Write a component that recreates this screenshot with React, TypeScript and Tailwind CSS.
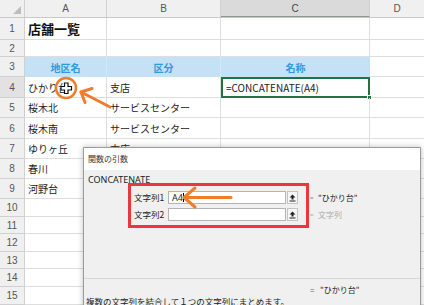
import React from "react";

const jp = "font-['Noto_Sans_CJK_JP','Noto_Sans',sans-serif]";

const rowHeights = [22, 17, 20, 21, 20, 21, 20, 20, 20, 18, 17, 18, 17, 18, 18];

const cells: Record<number, [string, string, string]> = {
  1: ["店舗一覧", "", ""],
  4: ["ひかり台", "支店", "=CONCATENATE(A4)"],
  5: ["桜木北", "サービスセンター", ""],
  6: ["桜木南", "サービスセンター", ""],
  7: ["ゆりヶ丘", "本店", ""],
  8: ["春川", "", ""],
  9: ["河野台", "", ""],
};

const cols = "grid grid-cols-[25px_82px_114px_149px_1fr]";

const RefIcon = () => (
  <svg width="7" height="8" viewBox="0 0 7 8">
    <path d="M3.5 0.5 L6.5 3.5 L4.5 3.5 L4.5 5.5 L2.5 5.5 L2.5 3.5 L0.5 3.5 Z" fill="#222" />
    <rect x="0.5" y="6.5" width="6" height="1" fill="#222" />
  </svg>
);

const App = () => {
  return (
    <div className={`relative w-[424px] h-[305px] overflow-hidden bg-white ${jp}`}>
      {/* --- column headers --- */}
      <div className={`${cols} h-[18px] bg-[#f0f0f0] border-b border-[#c8c8c8] text-[10px] text-[#555] font-['Liberation_Sans',sans-serif]`}>
        <div className="relative border-r border-[#d0d0d0]">
          <div className="absolute right-[3px] bottom-[3px] w-0 h-0 border-l-[8px] border-l-transparent border-b-[8px] border-b-[#bdbdbd]" />
        </div>
        <div className="flex items-center justify-center border-r border-[#d0d0d0]">A</div>
        <div className="flex items-center justify-center border-r border-[#d0d0d0]">B</div>
        <div className="flex items-center justify-center border-r border-[#d0d0d0] bg-[#dadada] border-b border-b-[#8a9a8f] text-[#444]">C</div>
        <div className="flex items-center justify-center">D</div>
      </div>

      {/* --- rows --- */}
      {rowHeights.map((h, i) => {
        const r = i + 1;
        const data = cells[r] ?? ["", "", ""];
        const isHead = r === 3;
        const teal = r >= 4 && r <= 9;
        const line = teal ? "border-b border-[#7fd3dd]" : "border-b border-[#dedede]";
        return (
          <div key={r} className={cols} style={{ height: h }}>
            <div
              className={`flex items-center justify-center text-[10px] border-r border-b border-[#d0d0d0] font-['Liberation_Sans',sans-serif] text-[#555] ${
                r === 4 ? "bg-[#e2e2e2]" : "bg-[#f0f0f0]"
              }`}
            >
              {r}
            </div>
            {isHead ? (
              <>
                <div className="flex items-center justify-center bg-[#c5e1f6] text-[#2f9ade] text-[10px] font-bold border-r border-[#d5e7f4]">地区名</div>
                <div className="flex items-center justify-center bg-[#c5e1f6] text-[#2f9ade] text-[10px] font-bold border-r border-[#d5e7f4]">区分</div>
                <div className="flex items-center justify-center bg-[#c5e1f6] text-[#2f9ade] text-[10px] font-bold">名称</div>
                <div className="border-b border-[#dedede]" />
              </>
            ) : (
              <>
                <div
                  className={`flex items-center pl-[3px] border-r border-[#dedede] ${line} ${
                    r === 1 ? "text-[13px] font-bold text-[#111]" : "text-[10px] text-[#222]"
                  }`}
                >
                  {data[0]}
                </div>
                <div className={`flex items-center pl-[3px] text-[10px] text-[#222] border-r border-[#dedede] ${line}`}>{data[1]}</div>
                <div
                  className={`relative flex items-center pl-[3px] text-[10px] text-[#222] ${
                    r === 4 ? "border-2 border-[#217346]" : `border-r border-[#dedede] ${line}`
                  }`}
                >
                  {data[2]}
                  {r === 4 && <div className="absolute right-[-4px] bottom-[-4px] w-[5px] h-[5px] bg-[#217346] border border-white" />}
                </div>
                <div className="border-b border-[#dedede]" />
              </>
            )}
          </div>
        );
      })}

      {/* --- cell cursor + circle + arrow --- */}
      <svg className="absolute left-0 top-0" width="424" height="305" viewBox="0 0 424 305">
        <path
          d="M64.5 83h3.5v3.5h3.5v3.5h-3.5v3.5h-3.5v-3.5h-3.5v-3.5h3.5z"
          fill="#fff"
          stroke="#111"
          strokeWidth="1.2"
          strokeLinejoin="miter"
        />
        <circle cx="66" cy="88" r="10" fill="none" stroke="#ef7d2b" strokeWidth="2.5" />
        <g stroke="#ef7d2b" strokeWidth="3" strokeLinecap="round" fill="none">
          <line x1="81" y1="92" x2="110" y2="107" />
          <polyline points="92,88.5 81,92 85,102.5" strokeLinejoin="round" />
        </g>
      </svg>

      {/* --- function arguments dialog --- */}
      <div className="absolute left-[83px] top-[147px] w-[338px] h-[170px] border border-[#9c9c9c] bg-[#f0f0f0] shadow-[0_0_6px_rgba(0,0,0,0.25)] text-[#222]">
        <div className="h-[22px] bg-white flex items-center pl-[4px] text-[8px] text-[#333]">関数の引数</div>
        <div className="pl-[4px] pt-[4px] text-[9px] leading-[11px] font-['Noto_Sans',sans-serif]">CONCATENATE</div>

        <div className="mt-[6px] flex flex-col gap-[4px] pl-[50px]">
          <div className="flex items-center h-[13px]">
            <div className="w-[34px] text-[8.5px]">文字列1</div>
            <div className="w-[118px] h-[13px] bg-white border border-[#b4b4b4] flex items-center pl-[3px] text-[9px] font-['Noto_Sans',sans-serif]">
              A4<span className="w-px h-[9px] bg-black" />
            </div>
            <div className="ml-px w-[11px] h-[13px] bg-[#f6f6f6] border border-[#c4c4c4] flex items-center justify-center">
              <RefIcon />
            </div>
            <div className="ml-[12px] w-[8px] text-[6px] text-[#888]">=</div>
            <div className="text-[8px]">"ひかり台"</div>
          </div>
          <div className="flex items-center h-[13px]">
            <div className="w-[34px] text-[8.5px]">文字列2</div>
            <div className="w-[118px] h-[13px] bg-white border border-[#b4b4b4]" />
            <div className="ml-px w-[11px] h-[13px] bg-[#f6f6f6] border border-[#c4c4c4] flex items-center justify-center">
              <RefIcon />
            </div>
            <div className="ml-[12px] w-[8px] text-[6px] text-[#aaa]">=</div>
            <div className="text-[8px] text-[#aaa]">文字列</div>
          </div>
        </div>

        <div className="mt-[57px] border-t border-[#d6d6d6] pt-[5px] flex pl-[226px] h-[17px] items-center text-[8px]">
          <span className="w-[10px] text-[#666]">=</span>
          <span>"ひかり台"</span>
        </div>
        <div className="pl-[2px] pt-px text-[8.5px] leading-[11px]">複数の文字列を結合して１つの文字列にまとめます。</div>
      </div>

      {/* --- annotations in dialog --- */}
      <div className="absolute left-[128px] top-[183px] w-[181px] h-[45px] border-[3px] border-[#e8383d]" />
      <svg className="absolute left-0 top-0" width="424" height="305" viewBox="0 0 424 305">
        <g stroke="#ef7d2b" strokeWidth="3" strokeLinecap="round" strokeLinejoin="round" fill="none">
          <line x1="184" y1="197.5" x2="231" y2="197.5" />
          <polyline points="195,188 184,197.5 195,207" />
        </g>
      </svg>
    </div>
  );
};

export default App;
